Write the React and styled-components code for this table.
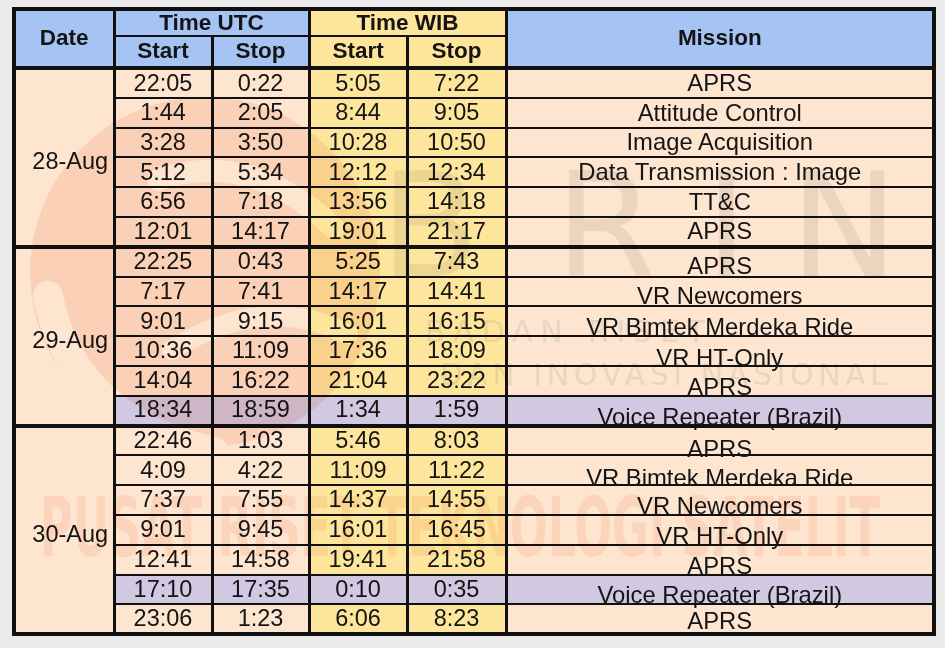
import React from "react";
import styled, { createGlobalStyle } from "styled-components";

const GlobalStyle = createGlobalStyle`
  html, body {
    margin: 0;
    padding: 0;
    background: #ebebeb;
  }
`;

const BLUE = "#a5c3f3";
const YELLOW = "#fde69c";
const PEACH = "#fde5cf";
const PURPLE = "#d1c8e1";
const LINE = "#111";

const Page = styled.div`
  position: relative;
  width: 945px;
  height: 648px;
  box-sizing: border-box;
  padding: 7px 0 0 12px;
  overflow: hidden;
  background: #ebebeb;
  font-family: "Liberation Sans", Arial, sans-serif;
  color: #141414;
`;

const Table = styled.table`
  border-collapse: collapse;
  table-layout: fixed;
  width: 924px;
  border: 4px solid ${LINE};
`;

const HeadCell = styled.th`
  background: ${(p) => p.$bg || BLUE};
  border: 2px solid ${LINE};
  border-left-width: 3px;
  border-right-width: 3px;
  border-bottom-width: ${(p) => (p.$last ? "4px" : "2px")};
  padding: 0;
  font-size: 22.5px;
  font-weight: bold;
  line-height: 1;
  text-align: center;
  vertical-align: middle;
`;

const Cell = styled.td`
  background: ${(p) => p.$bg};
  border: 2px solid ${LINE};
  border-left-width: 3px;
  border-right-width: 3px;
  border-top-width: ${(p) => (p.$groupTop ? "4px" : "2px")};
  padding: 0;
  font-size: 23.5px;
  line-height: 1;
  text-align: center;
  vertical-align: middle;
  white-space: nowrap;
`;

const DateCell = styled(Cell)`
  padding: 9px 0 0 12px;
`;

const MissionText = styled.span`
  display: block;
  font-size: 23.8px;
  line-height: 26px;
  padding-top: ${(p) => p.$shift}px;
  margin-bottom: -${(p) => p.$shift}px;
`;

const Row = styled.tr`
  height: ${(p) => p.$h}px;
`;

const Watermark = styled.svg`
  position: absolute;
  left: 0;
  top: 0;
  pointer-events: none;
  mix-blend-mode: multiply;
`;

const days = [
  {
    date: "28-Aug",
    rows: [
      ["22:05", "0:22", "5:05", "7:22", "APRS", 0],
      ["1:44", "2:05", "8:44", "9:05", "Attitude Control", 0],
      ["3:28", "3:50", "10:28", "10:50", "Image Acquisition", 0],
      ["5:12", "5:34", "12:12", "12:34", "Data Transmission : Image", 0],
      ["6:56", "7:18", "13:56", "14:18", "TT&C", 0],
      ["12:01", "14:17", "19:01", "21:17", "APRS", 0],
    ],
  },
  {
    date: "29-Aug",
    rows: [
      ["22:25", "0:43", "5:25", "7:43", "APRS", 4],
      ["7:17", "7:41", "14:17", "14:41", "VR Newcomers", 5],
      ["9:01", "9:15", "16:01", "16:15", "VR Bimtek Merdeka Ride", 6],
      ["10:36", "11:09", "17:36", "18:09", "VR HT-Only", 7],
      ["14:04", "16:22", "21:04", "23:22", "APRS", 6],
      ["18:34", "18:59", "1:34", "1:59", "Voice Repeater (Brazil)", 7, true],
    ],
  },
  {
    date: "30-Aug",
    rows: [
      ["22:46", "1:03", "5:46", "8:03", "APRS", 8],
      ["4:09", "4:22", "11:09", "11:22", "VR Bimtek Merdeka Ride", 8],
      ["7:37", "7:55", "14:37", "14:55", "VR Newcomers", 6],
      ["9:01", "9:45", "16:01", "16:45", "VR HT-Only", 6],
      ["12:41", "14:58", "19:41", "21:58", "APRS", 6],
      ["17:10", "17:35", "0:10", "0:35", "Voice Repeater (Brazil)", 6, true],
      ["23:06", "1:23", "6:06", "8:23", "APRS", 2],
    ],
  },
];

function WatermarkArt() {
  return (
    <Watermark width="945" height="648" viewBox="0 0 945 648">
      <defs>
        <mask id="logoCut">
          <rect width="945" height="648" fill="white" />
          <path d="M48 296 Q72 420 214 452" stroke="black" strokeWidth="30" fill="none" strokeLinecap="round" />
          <path d="M158 180 Q250 148 334 228" stroke="black" strokeWidth="22" fill="none" strokeLinecap="round" />
          <path d="M172 350 Q262 292 348 334" stroke="black" strokeWidth="20" fill="none" strokeLinecap="round" />
        </mask>
      </defs>
      <circle cx="205" cy="272" r="175" fill="rgb(236,98,62)" fillOpacity="0.15" mask="url(#logoCut)" />
      <g fill="rgb(115,105,95)" fillOpacity="0.12" fontFamily="'DejaVu Sans', sans-serif">
        <text x="380" y="276" fontSize="145">B</text>
        <text x="555" y="276" fontSize="145">R</text>
        <text x="705" y="276" fontSize="145">I</text>
        <text x="790" y="276" fontSize="145">N</text>
        <text x="425" y="342" fontSize="30" textLength="280" lengthAdjust="spacing">BADAN RISET</text>
        <text x="440" y="385" fontSize="30" textLength="447" lengthAdjust="spacing">DAN INOVASI NASIONAL</text>
      </g>
      <text
        x="40"
        y="556"
        fontSize="82"
        fontWeight="bold"
        fontFamily="'DejaVu Sans Condensed', 'DejaVu Sans', sans-serif"
        fill="rgb(240,110,70)"
        fillOpacity="0.13"
        textLength="840"
        lengthAdjust="spacingAndGlyphs"
      >
        PUSAT RISET TEKNOLOGI SATELIT
      </text>
    </Watermark>
  );
}

export default function App() {
  return (
    <Page>
      <GlobalStyle />
      <Table>
        <colgroup>
          <col style={{ width: 100 }} />
          <col style={{ width: 98 }} />
          <col style={{ width: 97 }} />
          <col style={{ width: 98 }} />
          <col style={{ width: 99 }} />
          <col />
        </colgroup>
        <thead>
          <Row $h={27}>
            <HeadCell rowSpan={2} $last>Date</HeadCell>
            <HeadCell colSpan={2}>Time UTC</HeadCell>
            <HeadCell colSpan={2} $bg={YELLOW}>Time WIB</HeadCell>
            <HeadCell rowSpan={2} $last>Mission</HeadCell>
          </Row>
          <Row $h={32}>
            <HeadCell $last>Start</HeadCell>
            <HeadCell $last>Stop</HeadCell>
            <HeadCell $last $bg={YELLOW}>Start</HeadCell>
            <HeadCell $last $bg={YELLOW}>Stop</HeadCell>
          </Row>
        </thead>
        <tbody>
          {days.map((day) =>
            day.rows.map(([utcStart, utcStop, wibStart, wibStop, mission, shift, purple], i) => {
              const groupTop = i === 0;
              const base = purple ? PURPLE : PEACH;
              const wib = purple ? PURPLE : YELLOW;
              return (
                <Row $h={29.8} key={day.date + i}>
                  {groupTop && (
                    <DateCell rowSpan={day.rows.length} $bg={PEACH} $groupTop>
                      {day.date}
                    </DateCell>
                  )}
                  <Cell $bg={base} $groupTop={groupTop}>{utcStart}</Cell>
                  <Cell $bg={base} $groupTop={groupTop}>{utcStop}</Cell>
                  <Cell $bg={wib} $groupTop={groupTop}>{wibStart}</Cell>
                  <Cell $bg={wib} $groupTop={groupTop}>{wibStop}</Cell>
                  <Cell $bg={base} $groupTop={groupTop}>
                    <MissionText $shift={shift}>{mission}</MissionText>
                  </Cell>
                </Row>
              );
            })
          )}
        </tbody>
      </Table>
      <WatermarkArt />
    </Page>
  );
}
